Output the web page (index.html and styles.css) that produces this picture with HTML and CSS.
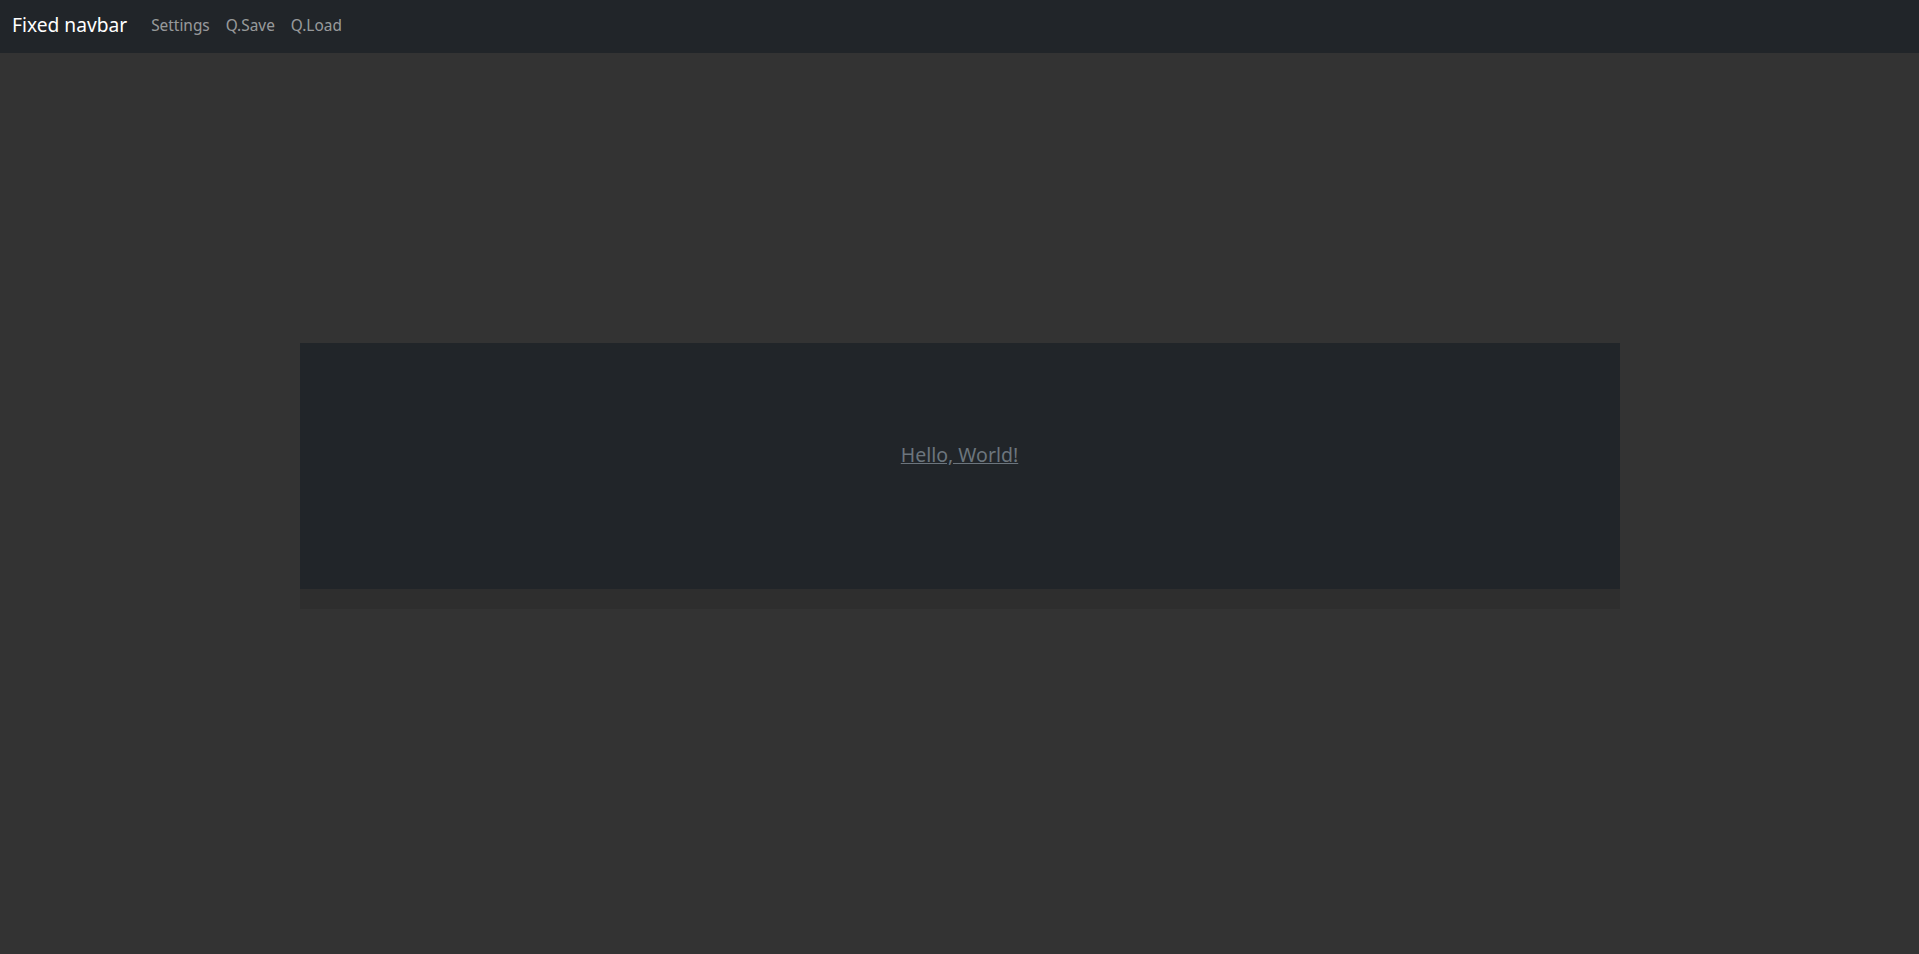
FILE: index.html
```html
<!DOCTYPE html>
<html>
<head>
  <meta charset="UTF-8">
  <meta name="viewport" content="width=device-width, initial-scale=1">
  <title>Fixed navbar</title>
  <link rel="stylesheet" href="styles.css">
</head>
<body>
  <!-- top bar -->
  <nav class="navbar">
    <a class="brand" href="#">Fixed navbar</a>
    <ul class="nav-links">
      <li><a href="#">Settings</a></li>
      <li><a href="#">Q.Save</a></li>
      <li><a href="#">Q.Load</a></li>
    </ul>
  </nav>

  <main class="page">
    <div class="card">
      <div class="card-body">
        <a class="hello" href="#">Hello, World!</a>
      </div>
      <div class="card-footer"></div>
    </div>
  </main>
</body>
</html>
```

FILE: styles.css
```css
body {
    margin: 0;
    background: #333333;
    font-family: "Noto Sans", "Open Sans", sans-serif;
    font-size: 16px;
    line-height: 1.5;
    color: #dee2e6;
}

.navbar {
    display: flex;
    align-items: center;
    height: 53px;
    padding: 0 12px 2px;
    box-sizing: border-box;
    background-color: #212529;
}

.brand {
    font-size: 19.2px;
    color: #fff;
    text-decoration: none;
    margin-right: 16px;
}

.nav-links {
    list-style-type: none;
    display: flex;
    margin: 0;
    padding: 0;
}

.nav-links a {
    display: block;
    padding: 8px;
    font-size: 15.4px;
    color: rgba(255, 255, 255, 0.55);
    text-decoration: none;
}

.page {
    display: flex;
    justify-content: center;
    padding-top: 290px;
}

.card {
    width: 1320px;
    background-color: #212529;
}

.card-body {
    height: 246px;
    padding-top: 97px;
    box-sizing: border-box;
    text-align: center;
}

.hello {
    font-size: 19.5px;
    color: #6c757d;
}

.card-footer {
    height: 20px;
    background-color: #2e2e2e;
}
```
